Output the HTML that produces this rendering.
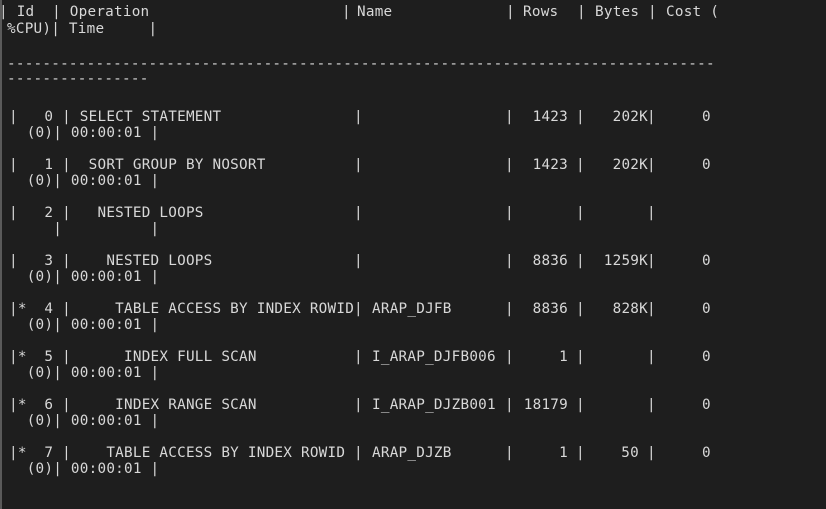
<!DOCTYPE html>
<html><head><meta charset="utf-8"><style>
html,body{margin:0;padding:0;}
body{width:826px;height:509px;background:#1e1e1e;position:relative;overflow:hidden;font-family:"DejaVu Sans Mono","Liberation Mono",monospace;font-size:14.3px;color:#d8d8d8;border-left:2px solid #5a5a5a;box-sizing:border-box;}
.s{position:absolute;white-space:pre;line-height:18px;height:18px;letter-spacing:0.24px;}
.r{text-align:right;}
</style></head><body>
<div class="s" style="left:-3px;top:3px">| Id  | Operation</div>
<div class="s" style="left:340px;top:3px">|</div>
<div class="s" style="left:355px;top:3px">Name</div>
<div class="s" style="left:504px;top:3px">|</div>
<div class="s" style="left:521px;top:3px">Rows</div>
<div class="s" style="left:575px;top:3px">|</div>
<div class="s" style="left:593px;top:3px">Bytes</div>
<div class="s" style="left:646px;top:3px">|</div>
<div class="s" style="left:664px;top:3px">Cost (</div>
<div class="s" style="left:5px;top:20px">%CPU)| Time     |</div>
<div class="s" style="left:5px;top:55px">--------------------------------------------------------------------------------</div>
<div class="s" style="left:5px;top:70px">----------------</div>

<div class="s" style="left:7px;top:108px">|   0 | SELECT STATEMENT</div>
<div class="s" style="left:352px;top:108px">|</div>
<div class="s" style="left:503px;top:108px">|</div>
<div class="s r" style="left:512px;width:54px;top:108px">1423</div>
<div class="s" style="left:574px;top:108px">|</div>
<div class="s r" style="left:583px;width:63px;top:108px">202K</div>
<div class="s" style="left:645px;top:108px">|</div>
<div class="s" style="left:700px;top:108px">0</div>
<div class="s" style="left:7px;top:124px">  (0)| 00:00:01 |</div>

<div class="s" style="left:7px;top:156px">|   1 |  SORT GROUP BY NOSORT</div>
<div class="s" style="left:352px;top:156px">|</div>
<div class="s" style="left:503px;top:156px">|</div>
<div class="s r" style="left:512px;width:54px;top:156px">1423</div>
<div class="s" style="left:574px;top:156px">|</div>
<div class="s r" style="left:583px;width:63px;top:156px">202K</div>
<div class="s" style="left:645px;top:156px">|</div>
<div class="s" style="left:700px;top:156px">0</div>
<div class="s" style="left:7px;top:172px">  (0)| 00:00:01 |</div>

<div class="s" style="left:7px;top:204px">|   2 |   NESTED LOOPS</div>
<div class="s" style="left:352px;top:204px">|</div>
<div class="s" style="left:503px;top:204px">|</div>
<div class="s" style="left:574px;top:204px">|</div>
<div class="s" style="left:645px;top:204px">|</div>
<div class="s" style="left:7px;top:220px">     |          |</div>

<div class="s" style="left:7px;top:252px">|   3 |    NESTED LOOPS</div>
<div class="s" style="left:352px;top:252px">|</div>
<div class="s" style="left:503px;top:252px">|</div>
<div class="s r" style="left:512px;width:54px;top:252px">8836</div>
<div class="s" style="left:574px;top:252px">|</div>
<div class="s r" style="left:583px;width:63px;top:252px">1259K</div>
<div class="s" style="left:645px;top:252px">|</div>
<div class="s" style="left:700px;top:252px">0</div>
<div class="s" style="left:7px;top:268px">  (0)| 00:00:01 |</div>

<div class="s" style="left:7px;top:300px">|*  4 |     TABLE ACCESS BY INDEX ROWID</div>
<div class="s" style="left:352px;top:300px">|</div>
<div class="s" style="left:370px;top:300px">ARAP_DJFB</div>
<div class="s" style="left:503px;top:300px">|</div>
<div class="s r" style="left:512px;width:54px;top:300px">8836</div>
<div class="s" style="left:574px;top:300px">|</div>
<div class="s r" style="left:583px;width:63px;top:300px">828K</div>
<div class="s" style="left:645px;top:300px">|</div>
<div class="s" style="left:700px;top:300px">0</div>
<div class="s" style="left:7px;top:316px">  (0)| 00:00:01 |</div>

<div class="s" style="left:7px;top:348px">|*  5 |      INDEX FULL SCAN</div>
<div class="s" style="left:352px;top:348px">|</div>
<div class="s" style="left:370px;top:348px">I_ARAP_DJFB006</div>
<div class="s" style="left:503px;top:348px">|</div>
<div class="s r" style="left:512px;width:54px;top:348px">1</div>
<div class="s" style="left:574px;top:348px">|</div>
<div class="s" style="left:645px;top:348px">|</div>
<div class="s" style="left:700px;top:348px">0</div>
<div class="s" style="left:7px;top:364px">  (0)| 00:00:01 |</div>

<div class="s" style="left:7px;top:396px">|*  6 |     INDEX RANGE SCAN</div>
<div class="s" style="left:352px;top:396px">|</div>
<div class="s" style="left:370px;top:396px">I_ARAP_DJZB001</div>
<div class="s" style="left:503px;top:396px">|</div>
<div class="s r" style="left:512px;width:54px;top:396px">18179</div>
<div class="s" style="left:574px;top:396px">|</div>
<div class="s" style="left:645px;top:396px">|</div>
<div class="s" style="left:700px;top:396px">0</div>
<div class="s" style="left:7px;top:412px">  (0)| 00:00:01 |</div>

<div class="s" style="left:7px;top:444px">|*  7 |    TABLE ACCESS BY INDEX ROWID</div>
<div class="s" style="left:352px;top:444px">|</div>
<div class="s" style="left:370px;top:444px">ARAP_DJZB</div>
<div class="s" style="left:503px;top:444px">|</div>
<div class="s r" style="left:512px;width:54px;top:444px">1</div>
<div class="s" style="left:574px;top:444px">|</div>
<div class="s r" style="left:583px;width:54px;top:444px">50</div>
<div class="s" style="left:645px;top:444px">|</div>
<div class="s" style="left:700px;top:444px">0</div>
<div class="s" style="left:7px;top:460px">  (0)| 00:00:01 |</div>
</body></html>
